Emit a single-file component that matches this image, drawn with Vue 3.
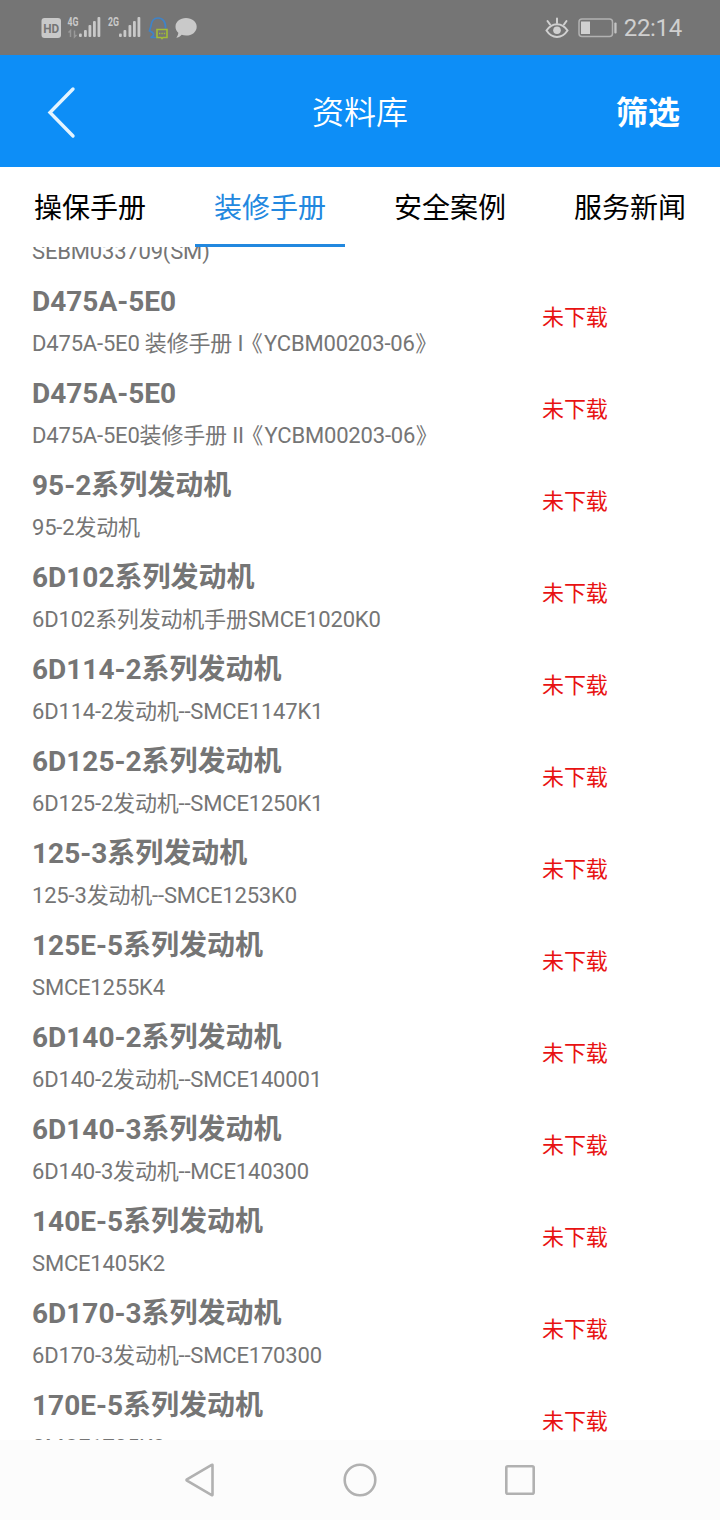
<template>
  <div class="page">
    <!-- 状态栏 -->
    <header class="status-bar">
      <svg class="status-icons" width="170" height="40" viewBox="0 0 170 40">
        <rect x="1.500" y="10" width="19.500" height="20" rx="3" fill="#c9c9c9" />
        <text x="11.200" y="25" class="hd-text" textLength="16" lengthAdjust="spacingAndGlyphs">HD</text>
        <text x="27.500" y="18" class="net-text" textLength="11" lengthAdjust="spacingAndGlyphs">4G</text>
        <path d="M30.500 29V22.500L28.500 24.500M34.500 22.500V29L36.500 27" class="data-arrow" />
        <g fill="#c9c9c9">
          <rect x="39" y="25.500" width="2.800" height="3.500" rx="1" />
          <rect x="44" y="22" width="2.800" height="7" rx="1" />
          <rect x="48.500" y="17" width="2.800" height="12" rx="1" />
          <rect x="53" y="13" width="2.800" height="16" rx="1" />
          <rect x="57.500" y="9" width="2.800" height="20" rx="1" />
        </g>
        <text x="68" y="18" class="net-text" textLength="11" lengthAdjust="spacingAndGlyphs">2G</text>
        <g fill="#c9c9c9">
          <rect x="79" y="25.500" width="2.800" height="3.500" rx="1" />
          <rect x="83.500" y="22" width="2.800" height="7" rx="1" />
          <rect x="88.500" y="17" width="2.800" height="12" rx="1" />
          <rect x="93" y="13" width="2.800" height="16" rx="1" />
          <rect x="97.500" y="9" width="2.800" height="20" rx="1" />
        </g>
        <path d="M117 29.500H110.500C113.500 28.500 114.500 26 112.500 24.500L109.500 22.800L111 18C111.500 13 114 10 118 10C122.500 10 126 13.500 125.500 20.500" class="head-line" />
        <path d="M117 21.500H127V29.500H123L122 30.500L121 29.500H117Z" class="chat-box" />
        <path d="M119 25.500H125.500" class="chat-dots" />
        <path d="M146 10C152 10 156.700 13.600 156.700 18.700C156.700 24 152 27.500 146 27.500C144.500 27.500 143 27.300 141.700 26.800C140 28.700 138 29.700 136.300 29.700C137.500 28.300 138.300 26.500 138.300 24.800C136.500 23.200 135.500 21 135.500 18.700C135.500 13.600 140 10 146 10Z" fill="#c9c9c9" />
      </svg>
      <div class="status-right">
        <svg width="24" height="24" viewBox="0 0 24 24" class="eye">
          <path d="M1.500 14.500C7 6 17 6 22.500 14.500C17 23 7 23 1.500 14.500Z" />
          <path d="M12 7V2.500M5 8.500L2.500 5M19 8.500L21.500 5" />
          <circle cx="12" cy="14.300" r="3.800" fill="#d0d0d0" stroke="none" />
        </svg>
        <svg width="40" height="20" viewBox="0 0 40 20">
          <rect x="1" y="1" width="33.500" height="17.500" rx="3" fill="none" stroke="#b2b2b2" stroke-width="1.500" />
          <rect x="3" y="3.500" width="9" height="12.500" fill="#d0d0d0" />
          <rect x="36.300" y="4.500" width="2.300" height="11" rx="1" fill="#c4c4c4" />
        </svg>
        <span class="clock">22:14</span>
      </div>
    </header>

    <!-- 导航栏 -->
    <nav class="nav-bar">
      <button class="back-button" aria-label="返回">
        <svg width="32" height="56" viewBox="0 0 32 56">
          <path d="M28 6L5 29.500L28 53" />
        </svg>
      </button>
      <h1 class="nav-title">资料库</h1>
      <button class="filter-button">筛选</button>
    </nav>

    <!-- 分类标签 -->
    <div class="tabs">
      <button
        v-for="(tab, index) in tabs"
        :key="tab"
        class="tab"
        :class="{ active: index === activeTab }"
        @click="activeTab = index"
      >
        {{ tab }}
      </button>
    </div>

    <!-- 手册列表 -->
    <main class="list">
      <div class="list-inner">
        <div v-for="(item, index) in manuals" :key="index" class="row">
          <div class="row-info">
            <h3 class="row-title">{{ item.title }}</h3>
            <p class="row-desc">{{ item.desc }}<span v-if="item.code" class="row-code"><span class="code-start">《</span>{{ item.code }}<span class="code-end">》</span></span></p>
          </div>
          <span v-if="item.title" class="row-status">未下载</span>
        </div>
      </div>
    </main>

    <!-- 系统按键 -->
    <footer class="system-bar">
      <svg width="40" height="40" viewBox="0 0 40 40">
        <path d="M32.500 5.200V34.800Q32.500 35.500 31.700 35.100L7 20.700Q6 20 7 19.300L31.700 4.900Q32.500 4.500 32.500 5.200Z" />
      </svg>
      <svg width="40" height="40" viewBox="0 0 40 40">
        <circle cx="20" cy="20" r="15.300" />
      </svg>
      <svg width="40" height="40" viewBox="0 0 40 40">
        <rect x="6.300" y="6.300" width="27.400" height="27.400" rx="1.500" />
      </svg>
    </footer>
  </div>
</template>

<script setup>
import { ref } from 'vue'

const tabs = ['操保手册', '装修手册', '安全案例', '服务新闻']
const activeTab = ref(1)

const manuals = [
  { title: '', desc: 'SEBM033709(SM)' },
  { title: 'D475A-5E0', desc: 'D475A-5E0 装修手册 I', code: 'YCBM00203-06' },
  { title: 'D475A-5E0', desc: 'D475A-5E0装修手册 II', code: 'YCBM00203-06' },
  { title: '95-2系列发动机', desc: '95-2发动机' },
  { title: '6D102系列发动机', desc: '6D102系列发动机手册SMCE1020K0' },
  { title: '6D114-2系列发动机', desc: '6D114-2发动机--SMCE1147K1' },
  { title: '6D125-2系列发动机', desc: '6D125-2发动机--SMCE1250K1' },
  { title: '125-3系列发动机', desc: '125-3发动机--SMCE1253K0' },
  { title: '125E-5系列发动机', desc: 'SMCE1255K4' },
  { title: '6D140-2系列发动机', desc: '6D140-2发动机--SMCE140001' },
  { title: '6D140-3系列发动机', desc: '6D140-3发动机--MCE140300' },
  { title: '140E-5系列发动机', desc: 'SMCE1405K2' },
  { title: '6D170-3系列发动机', desc: '6D170-3发动机--SMCE170300' },
  { title: '170E-5系列发动机', desc: 'SMCE1705K2' }
]
</script>

<style>
body {
  margin: 0;
  background: #fff;
}
</style>

<style scoped>
.page {
  display: flex;
  flex-direction: column;
  height: 1520px;
  overflow: hidden;
  background: #fff;
  font-family: Roboto, 'Noto Sans CJK SC', sans-serif;
}

button {
  padding: 0;
  border: none;
  background: none;
  font-family: inherit;
  cursor: pointer;
}

h1,
h3,
p {
  margin: 0;
}

/* 状态栏 */
.status-bar {
  display: flex;
  justify-content: space-between;
  align-items: center;
  flex: none;
  box-sizing: border-box;
  height: 55px;
  padding: 0 38px 0 40px;
  background: #757575;
}

.hd-text {
  fill: #757575;
  font-size: 13px;
  font-weight: 700;
  text-anchor: middle;
}

.net-text {
  fill: #c9c9c9;
  font-size: 12px;
  font-weight: 700;
}

.data-arrow {
  fill: none;
  stroke: #999;
  stroke-width: 1.5;
}

.head-line {
  fill: none;
  stroke: #3f83c8;
  stroke-width: 1.7;
}

.chat-box {
  fill: #757575;
  stroke: #a2bd37;
  stroke-width: 1.6;
}

.chat-dots {
  stroke: #a2bd37;
  stroke-width: 1.5;
  stroke-dasharray: 1.4 1;
}

.status-right {
  display: flex;
  align-items: center;
}

.status-right svg {
  margin-right: 9px;
}

.status-right svg + svg {
  margin-right: 6px;
}

.eye {
  fill: none;
  stroke: #d0d0d0;
  stroke-width: 2;
  stroke-linecap: round;
}

.clock {
  color: #cfcfcf;
  font-size: 24px;
  letter-spacing: -0.3px;
  line-height: 30px;
}

/* 导航栏 */
.nav-bar {
  display: grid;
  grid-template-columns: 1fr auto 1fr;
  align-items: center;
  flex: none;
  height: 112px;
  padding: 0 40px 0 45px;
  background: #0d8ef7;
  color: #fff;
}

.back-button {
  display: flex;
  justify-self: start;
}

.back-button path {
  fill: none;
  stroke: #e3f4ff;
  stroke-width: 3.4;
  stroke-linecap: round;
}

.nav-title {
  margin-left: -5px;
  padding-top: 4px;
  font-size: 32px;
  font-weight: 350;
  line-height: 48px;
}

.filter-button {
  justify-self: end;
  padding-top: 4px;
  color: #fff;
  font-size: 32px;
  font-weight: 700;
  line-height: 48px;
}

/* 分类标签 */
.tabs {
  display: grid;
  grid-template-columns: repeat(4, 1fr);
  flex: none;
  height: 80px;
}

.tab {
  margin: 0 15px;
  padding-top: 7px;
  border-bottom: 3px solid transparent;
  color: #000;
  font-size: 28px;
  line-height: 70px;
}

.tab.active {
  border-bottom-color: #2288df;
  color: #2288df;
}

/* 手册列表 */
.list {
  flex: 1;
  min-height: 0;
  overflow: hidden;
}

.list-inner {
  margin-top: -59px;
}

.row {
  display: flex;
  height: 92px;
  padding: 0 32px;
  color: #757575;
}

.row-info {
  width: 510px;
}

.row-title {
  height: 44px;
  font-size: 28px;
  font-weight: 700;
  line-height: 44px;
}

.row-desc {
  font-size: 22px;
  letter-spacing: -0.18px;
  line-height: 40px;
  white-space: nowrap;
}

/* 书名号按比例宽度排版，再补上两侧间距 */
.row-code {
  margin-left: 8px;
  font-feature-settings: 'palt' 1;
}

.code-start {
  margin-right: 2px;
}

.code-end {
  margin-left: 1px;
}

.row-status {
  color: #e81212;
  font-size: 22px;
  letter-spacing: -0.1px;
  line-height: 76px;
}

/* 系统按键 */
.system-bar {
  display: flex;
  justify-content: center;
  align-items: center;
  gap: 120px;
  flex: none;
  height: 80px;
  background: #fcfcfc;
}

.system-bar svg {
  fill: none;
  stroke: #b1b1b1;
  stroke-width: 2.6;
}
</style>
